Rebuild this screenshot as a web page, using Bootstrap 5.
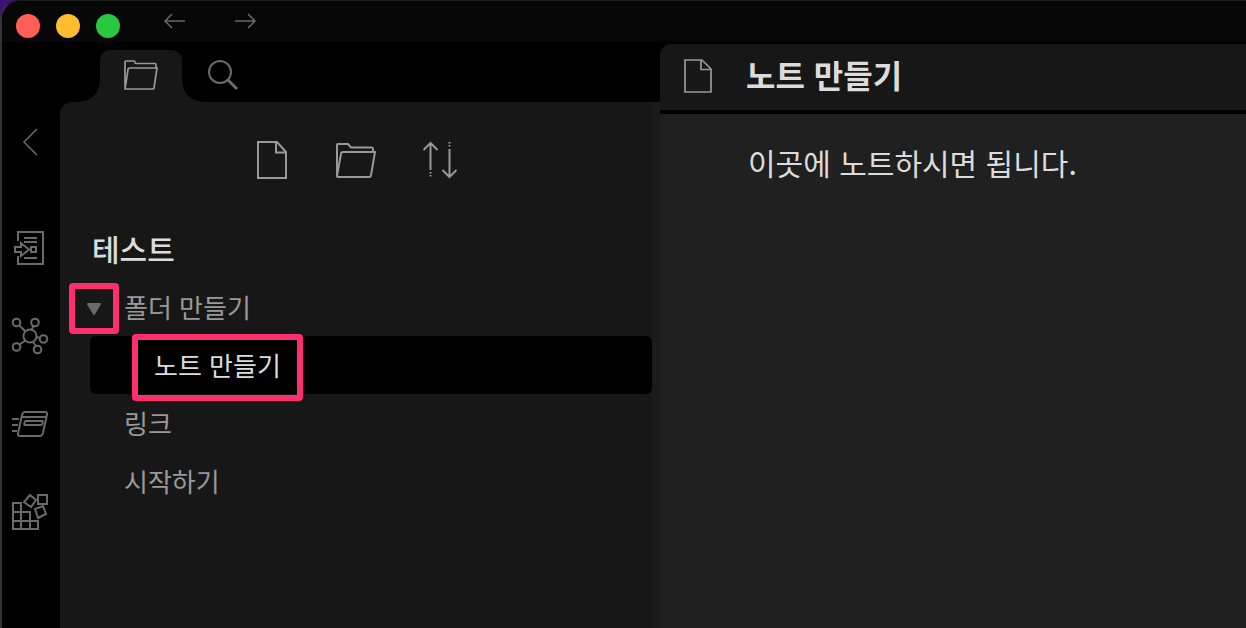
<!DOCTYPE html>
<html lang="ko" data-bs-theme="dark">
<head>
<meta charset="utf-8">
<meta name="viewport" content="width=device-width, initial-scale=1">
<title>노트 만들기</title>
<link href="https://cdn.jsdelivr.net/npm/bootstrap@5.3.0/dist/css/bootstrap.min.css" rel="stylesheet">
<script src="https://cdn.jsdelivr.net/npm/bootstrap@5.3.0/dist/js/bootstrap.bundle.min.js"></script>
<style>
  :root { --panel: #171717; --line: #6a6a6a; --tool: #999; --bright: #dcdcdc; --marker: #ff2e6c; }
  body { background: #3c1372; color: var(--bright); font-family: "Noto Sans CJK KR", sans-serif; }
  h1, h2 { color: var(--bright); }
  svg { display: block; fill: none; stroke: currentColor; stroke-width: 2; }
  .plain { background: none; border: 0; padding: 0; color: inherit; display: flex; align-items: center; justify-content: center; }
  .app-window { background: #000; border-left: 2px solid #333; border-top: 1px solid #1c1c1c; border-top-left-radius: 20px; }
  .titlebar { height: 41px; background: #070707; border-top-left-radius: 18px; color: var(--line); padding-left: 14px; }
  .light { width: 24px; height: 24px; border-radius: 50%; margin-top: 13px; }
  .light-close { background: #ff5f57; }
  .light-min { background: #febc2e; }
  .light-zoom { background: #28c840; }
  .history { width: 22px; height: 40px; }
  .history-group { margin-left: 44px; gap: 48px; }
  .rail { width: 58px; padding-top: 56px; color: var(--line); }
  .rail button { width: 56px; height: 88px; }
  .rail .collapse-btn { margin-bottom: 18px; }
  .sidebar { width: 600px; }
  .tabs { height: 60px; padding: 8px 0 0 40px; }
  .tab { width: 82px; height: 52px; color: var(--line); padding-bottom: 2px; }
  .tab-active { position: relative; background: var(--panel); border-radius: 10px 10px 0 0; color: var(--tool); }
  .tab-active::before, .tab-active::after { content: ""; position: absolute; bottom: 0; width: 20px; height: 20px; }
  .tab-active::before { right: 100%; background: radial-gradient(circle at 0 0, transparent 19px, var(--panel) 20px); }
  .tab-active::after { left: 100%; background: radial-gradient(circle at 100% 0, transparent 19px, var(--panel) 20px); }
  .panel { background: var(--panel); border-top-left-radius: 12px; border-right: 8px solid #1b1b1b; padding-left: 30px; }
  .tools { height: 116px; gap: 40px; color: var(--tool); padding-right: 30px; }
  .tools button { width: 44px; height: 44px; }
  .vault { height: 60px; font-size: 30px; line-height: 60px; font-weight: 500; padding-left: 2px; }
  .tree button { height: 58px; font-size: 26px; line-height: 56px; color: #999; }
  .tree .fold { width: 34px; padding: 4px 26px 0 0; color: var(--line); }
  .tree .entry { flex: 1; justify-content: flex-start; }
  .tree .top-level { padding-left: 34px; }
  .tree .current { background: #000; border-radius: 6px; color: var(--bright); padding-left: 64px; }
  .marked { position: relative; }
  .marked::after { content: ""; position: absolute; border: 6px solid var(--marker); border-radius: 4px; pointer-events: none; z-index: 1; }
  .fold.marked::after { left: -21px; top: 5px; width: 50px; height: 51px; }
  .current .marked::after { left: -22px; right: -22px; top: -3px; bottom: -8px; }
  .note { background: #202020; border-top-left-radius: 12px; margin-top: 2px; }
  .note-head { height: 70px; background: var(--panel); border-bottom: 4px solid #000; border-top-left-radius: 12px; padding: 0 24px 2px; gap: 34px; }
  .note-head h1 { font-size: 32px; line-height: 60px; padding-bottom: 4px; }
  .note-head svg { color: var(--tool); }
  .note-body { font-size: 30px; line-height: 48px; padding: 24px 40px 0 88px; }
</style>
</head>
<body>
<div class="app-window min-vh-100 d-flex flex-column">
  <header class="titlebar d-flex align-items-start">
    <div class="d-flex gap-3">
      <button class="plain light light-close" aria-label="닫기"></button>
      <button class="plain light light-min" aria-label="최소화"></button>
      <button class="plain light light-zoom" aria-label="확대"></button>
    </div>
    <nav class="history-group d-flex" aria-label="탐색 기록">
      <button class="plain history" aria-label="뒤로"><svg width="22" height="16" viewBox="0 0 22 16"><path d="M21 8H1M8 1L1 8l7 7" stroke-width="1.5"/></svg></button>
      <button class="plain history" aria-label="앞으로"><svg width="22" height="16" viewBox="0 0 22 16"><path d="M1 8h20M14 1l7 7-7 7" stroke-width="1.5"/></svg></button>
    </nav>
  </header>
  <div class="d-flex flex-grow-1">
    <nav class="rail flex-shrink-0" aria-label="도구 모음">
      <button class="plain collapse-btn" aria-label="사이드바 접기"><svg width="16" height="28" viewBox="0 0 16 28"><path d="M15 1L2 14l13 13" stroke-width="1.5"/></svg></button>
      <button class="plain" aria-label="빠른 전환"><svg width="32" height="36" viewBox="0 0 32 36"><path d="M4 11V2h25v32H4v-8M10 8h13M10 12h13M10 28h13M17 17h5v5h-5zM1 17h6v-4l8 6.500-8 6.500v-4H1z"/></svg></button>
      <button class="plain" aria-label="그래프 보기"><svg width="38" height="38" viewBox="0 0 38 38"><circle cx="19" cy="19" r="6.500"/><circle cx="5.500" cy="5.500" r="3.800"/><circle cx="24" cy="5.500" r="3.800"/><circle cx="32.500" cy="22" r="3.800"/><circle cx="26.500" cy="32.500" r="3.800"/><circle cx="5.500" cy="30" r="3.800"/><path d="M8.500 8.500l6 6M22.500 9l-2 4M25.500 20l4 1M22 25l3 4M14.500 23.500l-6 4"/></svg></button>
      <button class="plain" aria-label="카드"><svg width="38" height="28" viewBox="0 0 38 28"><path d="M14 2h20q2.500 0 2 2.500L32 23q-1 3-3 3H9q-2.500 0-2-2.500L11 5q1-3 3-3zM11 7h24M15 11h16q1 0 .8 1l-.6 2q-.2 1-1.200 1H14q-1 0-.8-1l.6-2q.2-1 1.200-1zM1 9h7M1 15h6M1 21h5"/></svg></button>
      <button class="plain" aria-label="플러그인"><svg width="38" height="38" viewBox="0 0 38 38"><path d="M2 10h8v26H2zM2 19h17v17M2 28h25v8H2M19 28v8M27 2h9v9h-9zM19 2l6 5-5 7-7-5zM24 16l8-3 3 8-8 4z"/></svg></button>
    </nav>
    <aside class="sidebar flex-shrink-0 d-flex flex-column">
      <div class="tabs d-flex">
        <button class="plain tab tab-active" aria-label="파일"><svg width="36" height="32" viewBox="0 0 36 32"><path d="M2 30V3q0-1 1-1h8q1 0 1 1.200T13 4.500h19q1 0 1 1.500v3M2 30L5 11q0-2 2-2h27L31 29q0 1-2 1z" stroke-width="1.700"/></svg></button>
        <button class="plain tab" aria-label="검색"><svg width="32" height="32" viewBox="0 0 32 32"><circle cx="13" cy="13" r="11"/><path d="M21 21l9 9" stroke-width="3"/></svg></button>
      </div>
      <div class="panel flex-grow-1">
        <div class="tools d-flex justify-content-center align-items-center">
          <button class="plain" aria-label="새 노트"><svg width="30" height="38" viewBox="0 0 30 38"><path d="M1 1h19l9 10v26H1zM19 1v10.500H29"/></svg></button>
          <button class="plain" aria-label="새 폴더"><svg width="42" height="38" viewBox="0 0 42 38"><path d="M2 36V4q0-1 1-1h10l3 3.500h21q1 0 1 1.500v3M2 35L6 13q0-2 2-2h32l-4 23q0 2-2 2H3q-1 0-1-1z"/></svg></button>
          <button class="plain" aria-label="정렬"><svg width="36" height="38" viewBox="0 0 36 38"><path d="M8.500 29V2M1.500 9l7-7 7 7M27.500 8v28M20.500 29l7 7 7-7"/><path d="M8.500 31v6M27.500 1v6" stroke-dasharray="1.500 1.500"/></svg></button>
        </div>
        <h2 class="vault m-0">테스트</h2>
        <ul class="tree list-unstyled m-0">
          <li>
            <div class="d-flex">
              <button class="plain fold marked" aria-label="폴더 접기" aria-expanded="true"><svg class="flex-shrink-0" width="16" height="14" viewBox="0 0 16 14"><path d="M2 2h12L8 12z" fill="currentColor" stroke-linejoin="round"/></svg></button>
              <button class="plain entry">폴더 만들기</button>
            </div>
            <ul class="list-unstyled">
              <li class="d-flex"><button class="plain entry current"><span class="marked">노트 만들기</span></button></li>
            </ul>
          </li>
          <li class="d-flex"><button class="plain entry top-level">링크</button></li>
          <li class="d-flex"><button class="plain entry top-level">시작하기</button></li>
        </ul>
      </div>
    </aside>
    <main class="note flex-grow-1">
      <div class="note-head d-flex align-items-center">
        <svg width="28" height="34" viewBox="0 0 28 34"><path d="M1 1h17l9 9v23H1zM17 1v9.500H27" stroke-width="1.700"/></svg>
        <h1 class="m-0 fw-bold">노트 만들기</h1>
      </div>
      <p class="note-body m-0">이곳에 노트하시면 됩니다.</p>
    </main>
  </div>
</div>
</body>
</html>
